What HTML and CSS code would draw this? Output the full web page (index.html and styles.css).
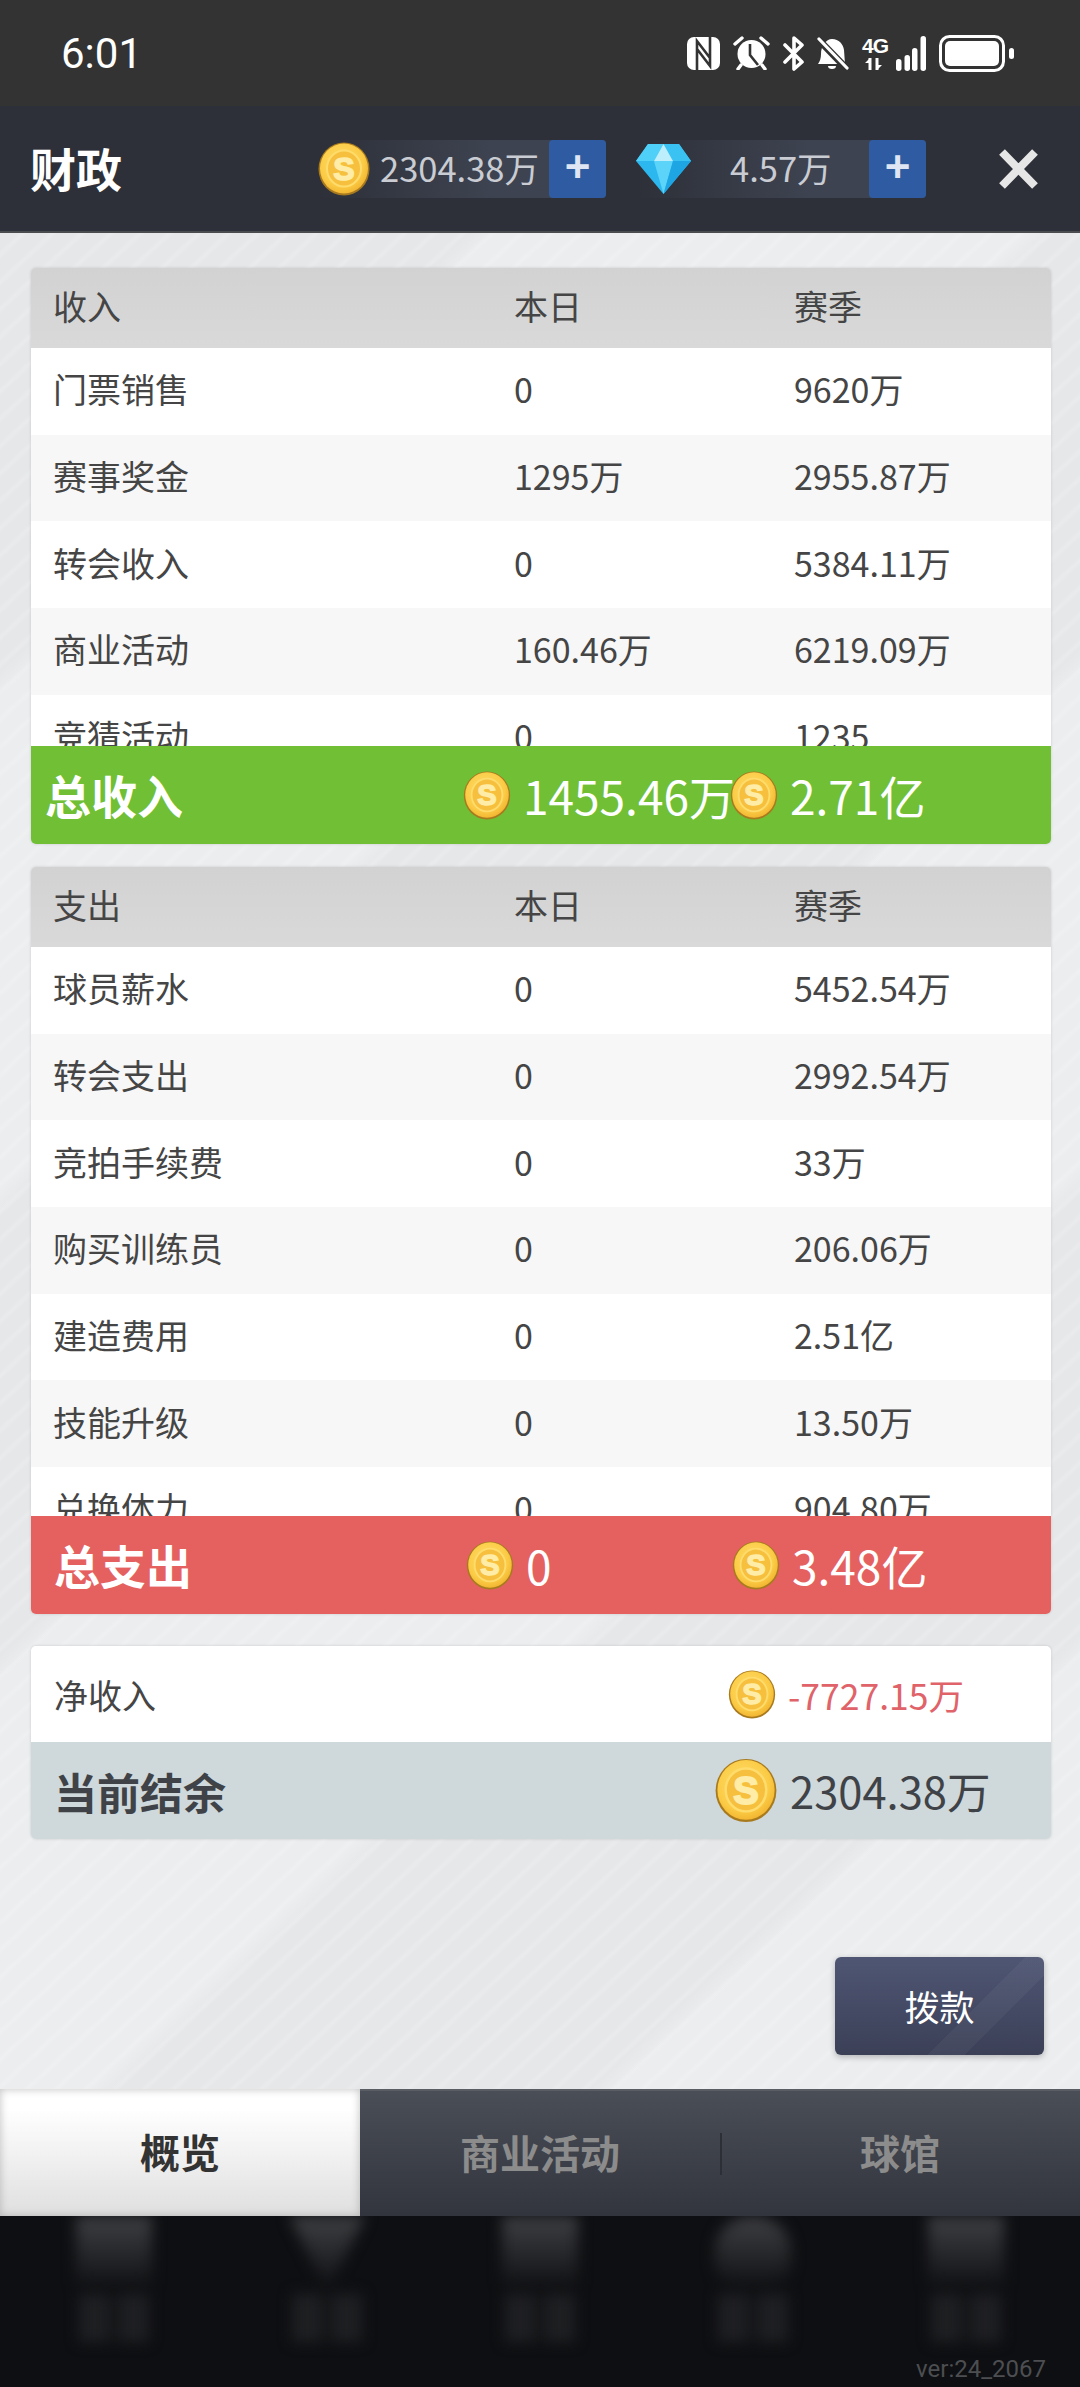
FILE: index.html
```html
<!DOCTYPE html>
<html lang="zh-CN">
<head>
  <meta charset="UTF-8">
  <title>财政</title>
  <link rel="stylesheet" href="styles.css">
</head>
<body>
  <svg class="defs" width="0" height="0">
    <defs>
      <radialGradient id="coinFill" cx="45%" cy="40%" r="65%">
        <stop offset="0" stop-color="#ffdf6e"/>
        <stop offset="0.7" stop-color="#fbcb45"/>
        <stop offset="1" stop-color="#f0b02c"/>
      </radialGradient>
      <symbol id="coin" viewBox="0 0 52 54">
        <ellipse cx="26" cy="27" rx="25.500" ry="26.500" fill="#a87a1e"/>
        <ellipse cx="26" cy="26.500" rx="24" ry="25" fill="url(#coinFill)"/>
        <ellipse cx="26" cy="26.500" rx="17" ry="18" fill="#f6c03e" stroke="#ffdc6c" stroke-width="2"/>
        <text x="26" y="38" text-anchor="middle" class="coin-s">S</text>
      </symbol>
    </defs>
  </svg>

  <div class="status-bar">
    <span class="time">6:01</span>
    <div class="status-icons">
      <svg width="33" height="33" viewBox="0 0 33 33"><rect width="33" height="33" rx="7" fill="#fff"/><path fill="none" stroke="#333" stroke-width="2.600" d="M10 33V4l13 17M23 0v29L10 12"/></svg>
      <svg width="37" height="34" viewBox="0 0 37 34"><path stroke="#fff" stroke-width="3.400" stroke-linecap="round" d="M2 8l7-6M35 8l-7-6M8 29l-3 4M29 29l3 4"/><circle cx="18.500" cy="18" r="14" fill="#fff"/><path fill="none" stroke="#333" stroke-width="2.600" d="M17 8v11l8 10"/></svg>
      <svg width="21" height="35" viewBox="0 0 21 35"><path fill="none" stroke="#fff" stroke-width="3.600" stroke-linecap="round" stroke-linejoin="round" d="M2 9l17 17-8 7V2l8 7L2 26"/></svg>
      <svg width="32" height="33" viewBox="0 0 32 33"><path fill="#fff" d="M15 2c7 0 11 5 12 11l1 14H1c2-3 3-6 3-10 0-8 5-15 11-15zM11 29h8a4 3 0 0 1-8 0z"/><path stroke="#333" stroke-width="7" d="M-1 0l30 31"/><path stroke="#fff" stroke-width="3.200" stroke-linecap="round" d="M2 2l28 29"/></svg>
      <div class="net">
        <span class="net-type">4G</span>
        <svg width="26" height="12" viewBox="0 0 26 12"><path stroke="#fff" stroke-width="3" d="M8 0v12M15 0v12"/><path fill="#fff" d="M8 0L3 5h5zM15 12l5-5h-5z"/></svg>
      </div>
      <svg class="signal" width="40" height="35" viewBox="0 0 40 35"><g fill="#fff"><rect x="10" y="23" width="5.500" height="12" rx="2.700"/><rect x="18.500" y="19" width="5.500" height="16" rx="2.700"/><rect x="26" y="12" width="5.500" height="23" rx="2.700"/><rect x="34.500" y="0" width="5.500" height="35" rx="2.700"/></g></svg>
      <svg class="battery" width="75" height="37" viewBox="0 0 75 37"><rect x="1.500" y="1.500" width="63" height="34" rx="9" fill="none" stroke="#fff" stroke-width="3"/><rect x="6" y="6" width="54" height="25" rx="5" fill="#fff"/><rect x="70" y="13" width="5" height="11" rx="2.500" fill="#fff"/></svg>
    </div>
  </div>

  <header class="top-bar">
    <h1 class="title">财政</h1>
    <div class="wallet">
      <svg class="coin-big"><use href="#coin"/></svg>
      <span class="wallet-value">2304.38万</span>
      <span class="plus">+</span>
    </div>
    <div class="wallet wallet-gem">
      <svg class="gem" viewBox="0 0 55 50">
        <polygon points="12,0 43,0 55,17 27.500,50 0,17" fill="#2cb8ee"/>
        <polygon points="12,0 27.500,0 18,17 0,17" fill="#4fd0f8"/>
        <polygon points="43,0 27.500,0 37,17 55,17" fill="#3ac2f2"/>
        <polygon points="27.500,0 37,17 18,17" fill="#bdeefc"/>
        <polygon points="18,17 37,17 27.500,50" fill="#5cd4f9"/>
        <polygon points="37,17 55,17 27.500,50" fill="#1ea6e4"/>
      </svg>
      <span class="wallet-value">4.57万</span>
      <span class="plus">+</span>
    </div>
    <svg class="close" width="39" height="40" viewBox="0 0 39 40"><path stroke="#e6e6e6" stroke-width="8" d="M3 3l33 34M36 3L3 37"/></svg>
  </header>

  <main class="content">
    <section class="panel">
      <div class="row row-head"><span>收入</span><span>本日</span><span>赛季</span></div>
      <div class="rows rows-income">
        <div class="row"><span>门票销售</span><span>0</span><span>9620万</span></div>
        <div class="row"><span>赛事奖金</span><span>1295万</span><span>2955.87万</span></div>
        <div class="row"><span>转会收入</span><span>0</span><span>5384.11万</span></div>
        <div class="row"><span>商业活动</span><span>160.46万</span><span>6219.09万</span></div>
        <div class="row"><span>竞猜活动</span><span>0</span><span>1235</span></div>
      </div>
      <div class="total total-income">
        <strong>总收入</strong>
        <span class="amount"><svg class="coin-mid"><use href="#coin"/></svg>1455.46万</span>
        <span class="amount"><svg class="coin-mid"><use href="#coin"/></svg>2.71亿</span>
      </div>
    </section>

    <section class="panel panel-spend">
      <div class="row row-head"><span>支出</span><span>本日</span><span>赛季</span></div>
      <div class="rows rows-spend">
        <div class="row"><span>球员薪水</span><span>0</span><span>5452.54万</span></div>
        <div class="row"><span>转会支出</span><span>0</span><span>2992.54万</span></div>
        <div class="row"><span>竞拍手续费</span><span>0</span><span>33万</span></div>
        <div class="row"><span>购买训练员</span><span>0</span><span>206.06万</span></div>
        <div class="row"><span>建造费用</span><span>0</span><span>2.51亿</span></div>
        <div class="row"><span>技能升级</span><span>0</span><span>13.50万</span></div>
        <div class="row"><span>兑换体力</span><span>0</span><span>904.80万</span></div>
      </div>
      <div class="total total-spend">
        <strong>总支出</strong>
        <span class="amount"><svg class="coin-mid"><use href="#coin"/></svg>0</span>
        <span class="amount"><svg class="coin-mid"><use href="#coin"/></svg>3.48亿</span>
      </div>
    </section>

    <section class="panel panel-net">
      <div class="net-row">
        <span>净收入</span>
        <span class="amount net-value"><svg class="coin-mid"><use href="#coin"/></svg>-7727.15万</span>
      </div>
      <div class="balance-row">
        <strong>当前结余</strong>
        <span class="amount balance-value"><svg class="coin-large"><use href="#coin"/></svg>2304.38万</span>
      </div>
    </section>

    <button class="grant-btn">拨款</button>
  </main>

  <nav class="tabs">
    <div class="tab active">概览</div>
    <div class="tab">商业活动</div>
    <div class="tab tab-last">球馆</div>
  </nav>

  <footer class="bottom-nav">
    <div class="blur-items">
      <div class="blur-item"><div class="blur-icon"></div><div class="blur-label"></div></div>
      <div class="blur-item"><div class="blur-icon blur-icon-v"></div><div class="blur-label"></div></div>
      <div class="blur-item"><div class="blur-icon"></div><div class="blur-label"></div></div>
      <div class="blur-item"><div class="blur-icon blur-icon-round"></div><div class="blur-label"></div></div>
      <div class="blur-item"><div class="blur-icon"></div><div class="blur-label"></div></div>
    </div>
    <span class="version">ver:24_2067</span>
  </footer>
</body>
</html>
```

FILE: styles.css
```css
* {
  box-sizing: border-box;
}

body {
  margin: 0;
  width: 1080px;
  height: 2387px;
  overflow: hidden;
  display: flex;
  flex-direction: column;
  font-family: "Noto Sans CJK SC", "Noto Sans", sans-serif;
  background: #0e0f12;
}

.defs {
  position: absolute;
}

.coin-s {
  font-family: "Liberation Sans", sans-serif;
  font-size: 32px;
  font-weight: 700;
  fill: #ffeca6;
  stroke: #ffeca6;
  stroke-width: 1.6px;
}

/* status bar */
.status-bar {
  height: 106px;
  background: #333333;
  display: flex;
  align-items: center;
  justify-content: space-between;
  padding: 0 66px 0 61px;
  flex-shrink: 0;
}

.time {
  font-family: Roboto, sans-serif;
  font-size: 42px;
  color: #fff;
}

.status-icons {
  display: flex;
  align-items: center;
  gap: 13px;
  height: 36px;
}

.net {
  display: flex;
  flex-direction: column;
  align-items: flex-start;
  gap: 2px;
  width: 27px;
}

.net-type {
  font-family: "Liberation Sans", sans-serif;
  font-size: 21px;
  line-height: 20px;
  font-weight: 700;
  color: #fff;
  letter-spacing: -1px;
}

.signal {
  margin-left: -16px;
}

/* header */
.top-bar {
  height: 127px;
  background: #2d3038;
  display: flex;
  align-items: center;
  padding-left: 30px;
  flex-shrink: 0;
  border-bottom: 2px solid #4a4c50;
}

.title {
  margin: 0 0 4px;
  width: 288px;
  font-size: 46px;
  font-weight: 700;
  color: #fff;
}

.wallet {
  display: flex;
  align-items: center;
  width: 288px;
  height: 58px;
  background: linear-gradient(90deg, #2d3038, #3e4351 60%);
  border-radius: 4px;
}

.wallet-gem {
  width: 290px;
  margin-left: 30px;
}

.coin-big {
  width: 52px;
  height: 54px;
  flex-shrink: 0;
}

.gem {
  width: 55px;
  height: 50px;
  flex-shrink: 0;
}

.wallet-value {
  flex: 1;
  font-size: 34.500px;
  color: #c9ccd2;
  white-space: nowrap;
  padding: 0 0 3px 10px;
}

.wallet-gem .wallet-value {
  padding-left: 39px;
}

.plus {
  width: 57px;
  height: 58px;
  flex-shrink: 0;
  background: #2f5ba3;
  border-radius: 4px;
  color: #dfe5f2;
  font-family: "Liberation Sans", sans-serif;
  font-weight: 700;
  font-size: 44px;
  line-height: 54px;
  text-align: center;
}

.close {
  margin-left: 73px;
}

/* main area */
.content {
  flex: 1;
  display: flex;
  flex-direction: column;
  align-items: stretch;
  padding: 35px 29px 0 31px;
  background-color: #e6e7e9;
  background-image:
    repeating-linear-gradient(137deg, rgba(255, 255, 255, 0) 0, rgba(255, 255, 255, 0) 12px, rgba(255, 255, 255, 0.16) 16px, rgba(255, 255, 255, 0) 20px),
    repeating-linear-gradient(137deg, #e6e7e9 0, #e6e7e9 320px, #ebedef 340px, #ebedef 700px, #e6e7e9 720px);
}

.panel {
  border-radius: 5px;
  overflow: hidden;
  box-shadow: 0 0 3px rgba(0, 0, 0, 0.15);
}

.panel-spend {
  margin-top: 23px;
}

.panel-net {
  margin-top: 32px;
}

.row {
  display: grid;
  grid-template-columns: 461px 280px 1fr;
  align-items: center;
  height: 86.700px;
  padding: 0 0 5px 22px;
  font-size: 34px;
  color: #454545;
  background: #fff;
}

.rows .row:nth-child(even) {
  background: #f7f7f7;
}

.row-head {
  height: 80px;
  background: linear-gradient(180deg, #d2d2d2, #d9d9d9);
}

.rows {
  overflow: hidden;
}

.rows-income {
  height: 398px;
}

.rows-spend {
  height: 569px;
}

.total {
  display: grid;
  height: 98px;
  align-items: center;
  color: #fff;
}

.total strong {
  font-size: 46px;
  font-weight: 700;
  padding-bottom: 2px;
}

.total-income {
  grid-template-columns: 418px 267px 1fr;
  padding-left: 14px;
  background: #70bf35;
}

.total-spend {
  grid-template-columns: 412px 266px 1fr;
  padding-left: 23px;
  background: #e56160;
}

.amount {
  display: flex;
  align-items: center;
  font-size: 46px;
  white-space: nowrap;
}

.coin-mid {
  width: 48px;
  height: 49px;
  margin-right: 12px;
  flex-shrink: 0;
}

.coin-large {
  width: 62px;
  height: 65px;
  margin-right: 13px;
  flex-shrink: 0;
}

.net-row {
  height: 96px;
  display: flex;
  align-items: center;
  justify-content: space-between;
  padding-left: 23px;
  background: #fff;
  font-size: 34px;
  color: #454545;
}

.net-value {
  width: 323px;
  font-size: 35.500px;
  color: #e0636a;
}

.balance-row {
  height: 97px;
  display: flex;
  align-items: center;
  justify-content: space-between;
  padding-left: 23px;
  background: #cfd8db;
  color: #3f4347;
}

.balance-row strong {
  font-size: 43px;
  font-weight: 700;
}

.balance-value {
  width: 336px;
  font-size: 43.500px;
}

.grant-btn {
  align-self: flex-end;
  width: 209px;
  height: 98px;
  margin: 118px 7px 0 0;
  padding: 0 0 2px;
  border: none;
  border-radius: 6px;
  font-family: inherit;
  font-size: 35px;
  color: #fff;
  background: linear-gradient(135deg, rgba(255, 255, 255, 0) 62%, rgba(255, 255, 255, 0.04) 62%, rgba(255, 255, 255, 0.04) 74%, rgba(255, 255, 255, 0) 74%), linear-gradient(180deg, #4f5673, #3b4057);
  box-shadow: 0 2px 6px rgba(0, 0, 0, 0.25);
}

/* tabs */
.tabs {
  height: 127px;
  display: flex;
  flex-shrink: 0;
  background: linear-gradient(180deg, #4a4e57, #32353d);
  border-top: 2px solid #5a5d64;
}

.tab {
  flex: 1;
  display: flex;
  align-items: center;
  justify-content: center;
  padding-bottom: 3px;
  font-size: 40px;
  font-weight: 700;
  color: #8c8c8c;
  position: relative;
}

.tab-last::before {
  content: "";
  position: absolute;
  left: 0;
  top: 42px;
  height: 42px;
  width: 2px;
  background: #2c2f35;
}

.tab.active {
  margin-top: -2px;
  color: #333;
  background: linear-gradient(180deg, #ffffff 15%, #dfdfdf 100%);
  box-shadow: inset 0 0 8px rgba(150, 150, 150, 0.6);
}

/* blurred game nav behind the overlay */
.bottom-nav {
  height: 171px;
  position: relative;
  overflow: hidden;
  flex-shrink: 0;
  background: #0e0f12;
}

.blur-items {
  display: flex;
  padding: 0 8px;
  filter: blur(7px);
}

.blur-item {
  flex: 1;
  display: flex;
  flex-direction: column;
  align-items: center;
}

.blur-icon {
  width: 76px;
  height: 68px;
  background: linear-gradient(180deg, #3e3f42, #131417);
}

.blur-icon-v {
  clip-path: polygon(0 0, 100% 0, 55% 100%, 45% 100%);
}

.blur-icon-round {
  border-radius: 50% 50% 30% 30%;
}

.blur-label {
  width: 70px;
  height: 48px;
  margin-top: 10px;
  background: linear-gradient(90deg, #1e1f22 44%, transparent 44%, transparent 56%, #1e1f22 56%);
}

.version {
  position: absolute;
  right: 34px;
  bottom: 4px;
  font-family: Roboto, sans-serif;
  font-size: 24px;
  color: #4c4e51;
}
```
